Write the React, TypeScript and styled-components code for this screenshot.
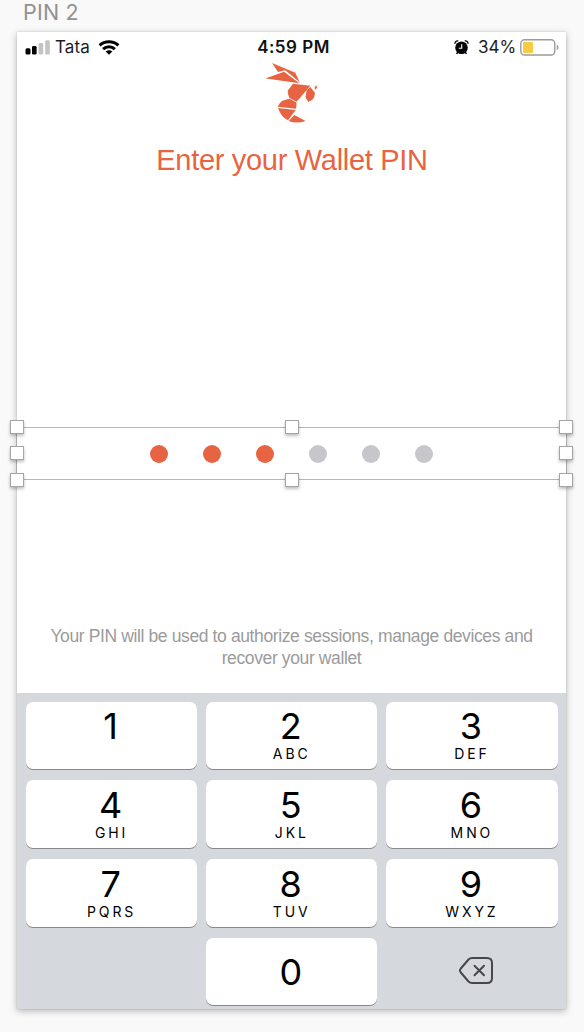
import React from "react";
import styled, { createGlobalStyle } from "styled-components";

const GlobalStyle = createGlobalStyle`
  * { box-sizing: border-box; }
  body { margin: 0; background: #f9f9f9; overflow: hidden; }
`;

const Canvas = styled.main`
  width: 584px;
  height: 1032px;
  background: #f9f9f9;
  font-family: Inter, "Liberation Sans", sans-serif;
  overflow: hidden;
`;

const ArtboardLabel = styled.div`
  height: 32px;
  padding-left: 23px;
  font-size: 21.5px;
  line-height: 25px;
  letter-spacing: 0.2px;
  color: #929292;
`;

const Artboard = styled.section`
  width: 549px;
  height: 977px;
  margin-left: 17px;
  display: flex;
  flex-direction: column;
  background: #fff;
  box-shadow: 0 2px 7px rgba(0, 0, 0, 0.28), 0 0 1px rgba(0, 0, 0, 0.25);
`;

const StatusBar = styled.header`
  height: 31px;
  flex: none;
  display: grid;
  grid-template-columns: 1fr auto 1fr;
  align-items: center;
  padding: 0 7px 0 8px;
  font-size: 17px;
  line-height: 31px;
  color: #1c1c1e;
`;

const StatusGroup = styled.div<{ $end?: boolean }>`
  display: flex;
  align-items: center;
  justify-content: ${(p) => (p.$end ? "flex-end" : "flex-start")};
  height: 31px;
`;

const Carrier = styled.span`
  margin: 0 8px 0 5px;
  letter-spacing: 0.1px;
`;

const Clock = styled.span`
  font-weight: 600;
  font-size: 17px;
  letter-spacing: 0.5px;
  color: #111;
  padding-left: 3px;
`;

const Percent = styled.span`
  margin: 0 4px 0 9px;
  letter-spacing: -0.1px;
`;

const Logo = styled.svg`
  flex: none;
  display: block;
  margin-left: 249px;
`;

const Title = styled.h1`
  flex: none;
  margin: 20px 0 0;
  padding-left: 1px;
  height: 34px;
  text-align: center;
  font: 400 29px/34px "Liberation Sans", Arial, sans-serif;
  letter-spacing: -0.3px;
  color: #e86441;
`;

const PinRow = styled.div`
  position: relative;
  flex: none;
  height: 53px;
  margin-top: 250px;
  display: flex;
  align-items: center;
  padding: 0 0 0 133px;
  gap: 35px;
  border-top: 1px solid #b6b6b6;
  border-bottom: 1px solid #b6b6b6;
  box-shadow: -1px 0 #aaa, 1px 0 #aaa;
`;

const Dot = styled.span<{ $filled: boolean }>`
  width: 18px;
  height: 18px;
  border-radius: 50%;
  background: ${(p) => (p.$filled ? "#e66441" : "#c7c6cb")};
`;

const Handle = styled.i<{ $x: number; $y: number }>`
  position: absolute;
  left: ${(p) => p.$x}px;
  top: ${(p) => p.$y}px;
  width: 14px;
  height: 14px;
  background: #fff;
  border: 1px solid #a5a5a5;
  box-shadow: 0 2px 3px rgba(0, 0, 0, 0.25);
`;

const Note = styled.p`
  flex: none;
  margin: 145px 0 0;
  text-align: center;
  font: 400 17.5px/22px "Liberation Sans", Arial, sans-serif;
  letter-spacing: -0.38px;
  color: #9b9b9b;
`;

const Keypad = styled.div`
  height: 316px;
  flex: none;
  margin-top: auto;
  padding: 9px 8.5px 0 9px;
  display: grid;
  grid-template-columns: repeat(3, 1fr);
  grid-template-rows: 67px 68px 68px 67px;
  gap: 11px 9px;
  background: #d5d8dd;
`;

const Key = styled.button<{ $center?: boolean }>`
  border: 0;
  padding: ${(p) => (p.$center ? "14px 2px 0 0" : "4px 2px 0 0")};
  display: flex;
  flex-direction: column;
  align-items: center;
  justify-content: flex-start;
  border-radius: 7px;
  background: #fff;
  box-shadow: 0 1px 0 #87898c;
  font-family: Inter, sans-serif;
  color: #000;

  &:nth-child(n + 4):nth-child(-n + 9) {
    padding-top: 5px;
  }
`;

const Digit = styled.span`
  font-size: 36px;
  line-height: 41px;
`;

const Letters = styled.span`
  margin-top: -1px;
  margin-left: 2px;
  font-size: 14px;
  line-height: 15px;
  letter-spacing: 2.9px;
`;

const DeleteKey = styled.div`
  display: flex;
  align-items: center;
  justify-content: center;
  padding: 0 0 3px 9px;
`;

const EmptyCell = styled.span``;

const keys: [string, string][] = [
  ["1", ""],
  ["2", "ABC"],
  ["3", "DEF"],
  ["4", "GHI"],
  ["5", "JKL"],
  ["6", "MNO"],
  ["7", "PQRS"],
  ["8", "TUV"],
  ["9", "WXYZ"],
];

const handles: [number, number][] = [
  [-7, -8], [268, -8], [542, -8],
  [-7, 18], [542, 18],
  [-7, 45], [268, 45], [542, 45],
];

const Signal = () => (
  <svg width="25" height="15" viewBox="0 0 25 15">
    <rect x="0.5" y="8.3" width="5" height="6.2" rx="1.5" fill="#000" />
    <rect x="7" y="6" width="4.6" height="8.5" rx="1.3" fill="#000" />
    <rect x="13.6" y="3" width="4.6" height="11.5" rx="1.3" fill="#c4c4c4" />
    <rect x="20.2" y="0.3" width="4.6" height="14.2" rx="1.3" fill="#c4c4c4" />
  </svg>
);

const Wifi = () => (
  <svg width="22" height="15" viewBox="0 0 22 15" fill="none" stroke="#000" strokeWidth="3">
    <path d="M1.6 5.4C6.8.4 15.2.4 20.4 5.4" />
    <path d="M5.1 9.1C8.5 5.9 13.5 5.9 16.9 9.1" />
    <path d="M11 14.8 7.7 11.5C9.6 9.9 12.4 9.9 14.3 11.5Z" fill="#000" stroke="none" />
  </svg>
);

const Alarm = () => (
  <svg width="15" height="15" viewBox="0 0 15 15">
    <path d="M.9 3.8C.8 1.9 2.4.6 4.2 1M14.1 3.8C14.2 1.9 12.6.6 10.8 1" fill="none" stroke="#000" strokeWidth="1.3" />
    <path d="M3.9 12 2.6 13.9M11.1 12 12.4 13.9" stroke="#000" strokeWidth="1.5" />
    <circle cx="7.5" cy="7.8" r="6.3" fill="#000" />
    <path d="M7.7 4.2V8.2H4.8" fill="none" stroke="#fff" strokeWidth="1.1" />
  </svg>
);

const Battery = () => (
  <svg width="39" height="17" viewBox="0 0 39 17">
    <rect x=".8" y=".8" width="34" height="15.2" rx="3.8" fill="#fff" stroke="#9b9b9b" strokeWidth="1.4" />
    <rect x="3" y="3" width="10" height="11" rx="1" fill="#f7cb46" />
    <path d="M36.8 5.5C39 6.6 39 10.2 36.8 11.3Z" fill="#9b9b9b" />
  </svg>
);

export default function App() {
  return (
    <Canvas>
      <GlobalStyle />
      <ArtboardLabel>PIN 2</ArtboardLabel>
      <Artboard>
        <StatusBar>
          <StatusGroup>
            <Signal />
            <Carrier>Tata</Carrier>
            <Wifi />
          </StatusGroup>
          <Clock>4:59 PM</Clock>
          <StatusGroup $end>
            <Alarm />
            <Percent>34%</Percent>
            <Battery />
          </StatusGroup>
        </StatusBar>
        <Logo width="52" height="60" viewBox="48 24 156 180" fill="#e66441">
          <path d="M66 24 136 53 149 82 106 46 84 51Z" />
          <path d="M47 70 102 50 148 85Z" />
          <path d="M129 86 181 92 140 140 118 129Q113 118 113 107Z" />
          <path d="M181 96 195 113Q194 125 189 133L175 141Q167 132 167 124L170 106Z" />
          <path d="M194 96 201 91Q203 99 195 105Z" />
          <path d="M83 155Q88 143 97 137L118 131 139 142Q141 152 138 161Z" />
          <path d="M84 159 137 165 114 196Q94 187 84 159Z" />
          <path d="M133 180 167 198Q140 207 116 198Z" />
        </Logo>
        <Title>Enter your Wallet PIN</Title>
        <PinRow>
          {[0, 1, 2, 3, 4, 5].map((i) => (
            <Dot key={i} $filled={i < 3} />
          ))}
          {handles.map(([x, y]) => (
            <Handle key={`${x},${y}`} $x={x} $y={y} />
          ))}
        </PinRow>
        <Note>
          Your PIN will be used to authorize sessions, manage devices and
          <br />
          recover your wallet
        </Note>
        <Keypad>
          {keys.map(([digit, letters]) => (
            <Key key={digit}>
              <Digit>{digit}</Digit>
              {letters && <Letters>{letters}</Letters>}
            </Key>
          ))}
          <EmptyCell />
          <Key $center>
            <Digit>0</Digit>
          </Key>
          <DeleteKey>
            <svg width="34" height="27" viewBox="0 0 34 27" fill="none" stroke="#46484c" strokeWidth="2" strokeLinecap="round" strokeLinejoin="round">
              <path d="M13 1H28Q33 1 33 6V21Q33 26 28 26H13Q11 26 9.5 24.5L1.8 15.5Q.2 13.5 1.8 11.5L9.5 2.5Q11 1 13 1Z" />
              <path d="M15.5 8.7 25 18.3M25 8.7 15.5 18.3" />
            </svg>
          </DeleteKey>
        </Keypad>
      </Artboard>
    </Canvas>
  );
}
